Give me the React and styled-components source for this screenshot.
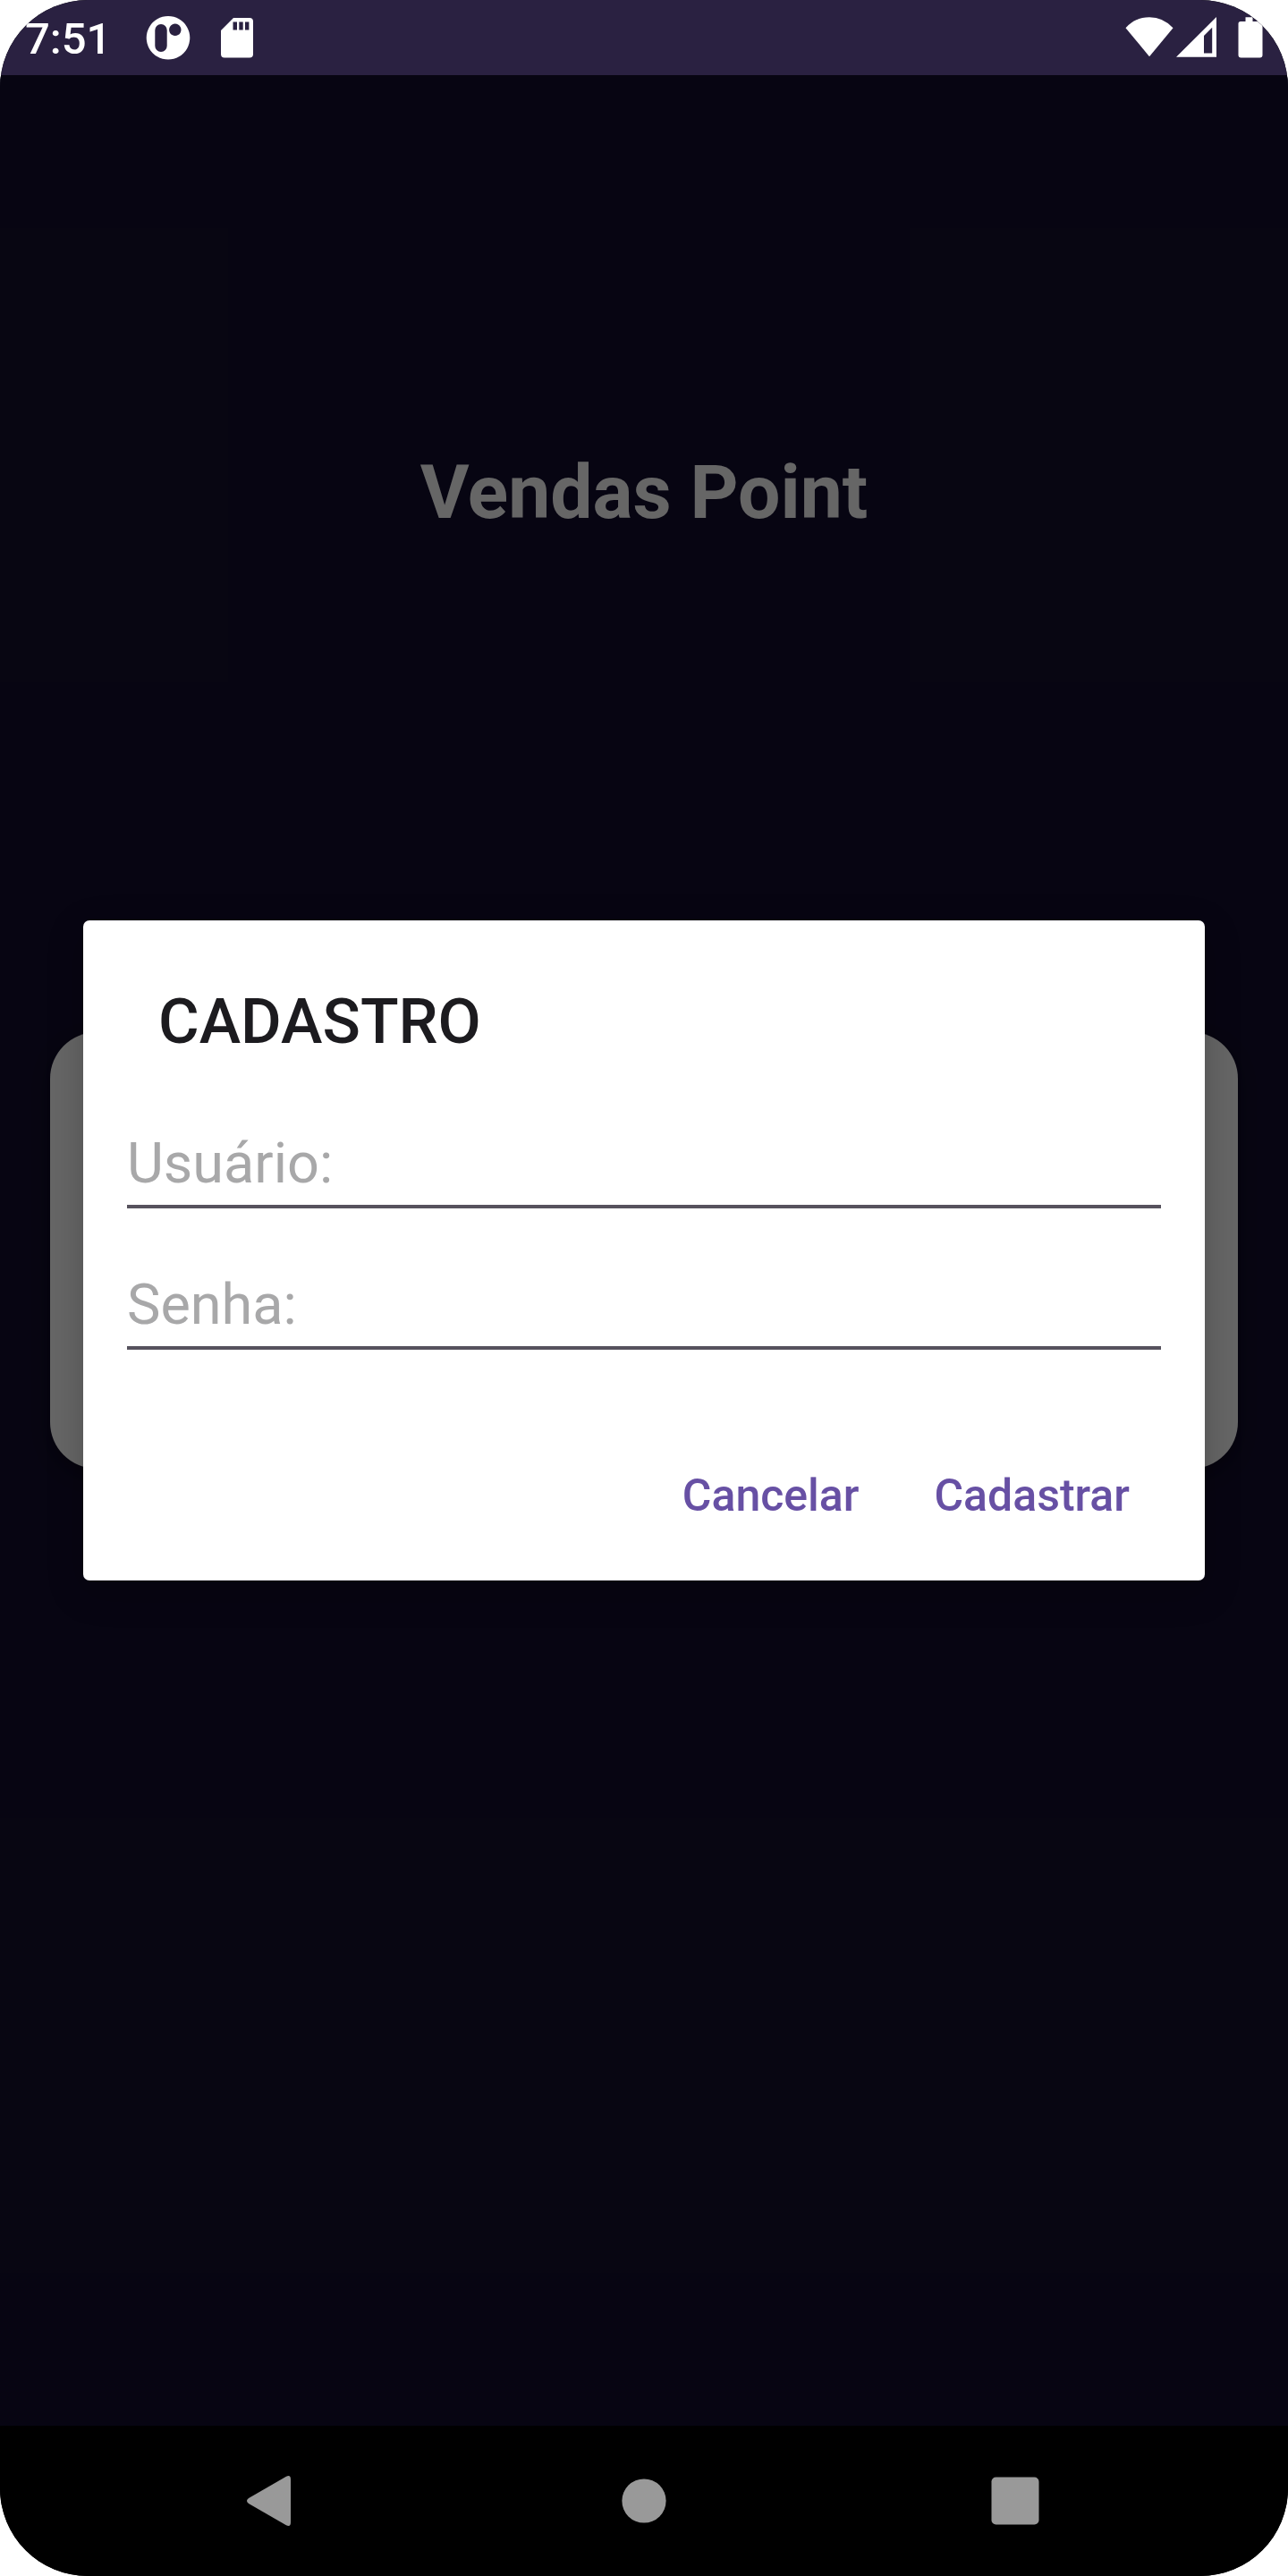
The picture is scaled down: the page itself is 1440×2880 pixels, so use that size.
import React from "react";
import styled, { createGlobalStyle } from "styled-components";

const GlobalStyle = createGlobalStyle`
  *, *::before, *::after { box-sizing: border-box; }
  body {
    margin: 0;
    background: #ffffff;
    font-family: Roboto, "Liberation Sans", sans-serif;
  }
`;

const Device = styled.div`
  display: flex;
  flex-direction: column;
  min-height: 100vh;
  border-radius: 98px;
  overflow: hidden;
  background: #000000;
`;

const StatusBar = styled.header`
  display: flex;
  align-items: center;
  justify-content: space-between;
  height: 84px;
  padding: 0 28px;
  background: #2a2141;
  color: #ffffff;
`;

const StatusGroup = styled.div`
  display: flex;
  align-items: center;
  gap: ${(p) => p.$gap}px;
`;

const Clock = styled.time`
  margin-right: 5px;
  padding-top: 3px;
  font-size: 49px;
  line-height: 56px;
  font-weight: 500;
`;

const StatusIcon = styled.svg`
  display: block;
  width: ${(p) => p.$width}px;
  height: 50px;
  fill: #ffffff;
`;

/* The app screen and the dialog layer share one grid cell. */
const Stage = styled.div`
  flex: 1;
  display: grid;
  grid-template: minmax(0, 1fr) / minmax(0, 1fr);
`;

const Screen = styled.main`
  grid-area: 1 / 1;
  display: grid;
  grid-template-rows: 1fr auto 1fr;
  padding: 0 56px;
  background: #130e2d;
`;

const AppTitle = styled.h1`
  margin: 0;
  padding-top: 418px;
  font-size: 84px;
  line-height: 98px;
  font-weight: 700;
  text-align: center;
  color: #ffffff;
`;

const LoginCard = styled.section`
  min-height: 488px;
  border-radius: 52px;
  background: #ffffff;
  box-shadow: 0 8px 20px rgba(0, 0, 0, 0.3);
`;

const Scrim = styled.div`
  grid-area: 1 / 1;
  display: flex;
  align-items: center;
  padding: 0 93px;
  background: rgba(0, 0, 0, 0.6);
`;

const Dialog = styled.form`
  flex: 1;
  display: flex;
  flex-direction: column;
  padding: 72px 0 32px;
  border-radius: 7px;
  background: #ffffff;
  box-shadow: 0 12px 40px rgba(0, 0, 0, 0.22);
`;

const DialogTitle = styled.h2`
  margin: 0;
  padding: 0 84px;
  font-size: 70px;
  line-height: 82px;
  font-weight: 500;
  color: #1c1b1f;
`;

const Fields = styled.div`
  display: flex;
  flex-direction: column;
  gap: 70px;
  padding: 80px 49px 100px;
`;

const Field = styled.input`
  width: 100%;
  height: 88px;
  padding: 0 0 10px;
  border: 0;
  border-bottom: 4px solid #56525d;
  border-radius: 0;
  outline: 0;
  background: transparent;
  font-family: inherit;
  font-size: 63px;
  line-height: 74px;
  color: #1c1b1f;

  &::placeholder {
    color: #a8a8a9;
    opacity: 1;
  }
`;

const Actions = styled.div`
  display: flex;
  justify-content: flex-end;
  padding: 0 42px;
`;

const TextButton = styled.button`
  height: 126px;
  padding: 0 42px;
  border: 0;
  background: transparent;
  font-family: inherit;
  font-size: 50px;
  line-height: 58px;
  font-weight: 500;
  color: #6750a4;
  cursor: pointer;
`;

const NavBar = styled.nav`
  display: flex;
  height: 168px;
  padding: 0 97px;
  background: #000000;
`;

const NavButton = styled.button`
  flex: 1;
  display: flex;
  align-items: center;
  justify-content: center;
  padding: 0;
  border: 0;
  background: transparent;
  cursor: pointer;
`;

const NavIcon = styled.svg`
  display: block;
  width: 70px;
  height: 70px;
  fill: #999999;
`;

function StatusIcons() {
  return (
    <StatusGroup $gap={3} aria-hidden="true">
      <StatusIcon $width={54} viewBox="0 0 54 50">
        <path d="M0.5 14.2 Q11.5 2.2 27 2.2 T53.5 14.2 L27 46.2 Z" />
      </StatusIcon>
      <StatusIcon $width={45} viewBox="0 0 45 50">
        <path fillRule="evenodd" d="M0 46.8 L45 2 V46.8 Z M31 23 V42.5 H40.2 V13.8 Z" />
      </StatusIcon>
      <StatusIcon $width={49} viewBox="0 0 49 50">
        <path d="M29.500 2.200 H37.500 V7 H46 Q48.500 7 48.500 9.500 V44.500 Q48.500 47.500 45.500 47.500 H24.500 Q21.500 47.500 21.500 44.500 V9.500 Q21.500 7 24 7 H29.500 Z" />
      </StatusIcon>
    </StatusGroup>
  );
}

export default function App() {
  return (
    <>
      <GlobalStyle />
      <Device>
        <StatusBar>
          <StatusGroup $gap={34}>
            <Clock>7:51</Clock>
            <StatusIcon $width={50} viewBox="0 0 50 50" aria-hidden="true">
              <path
                fillRule="evenodd"
                d="M25 1 a24.300 24.300 0 1 0 0.010 0 Z M17 10 a6.700 6.700 0 0 1 6.700 6.700 V34.300 a6.700 6.700 0 0 1 -13.400 0 V16.700 A6.700 6.700 0 0 1 17 10 Z M32.800 9.600 a6.700 6.700 0 1 1 -0.010 0 Z"
              />
            </StatusIcon>
            <StatusIcon $width={36} viewBox="0 0 36 50" aria-hidden="true">
              <path
                fillRule="evenodd"
                d="M14 3 H32 Q36 3 36 7 V43.500 Q36 47.500 32 47.500 H4 Q0 47.500 0 43.500 V17 Z M13.500 7.500 V16.500 H18 V7.500 Z M20.300 7.500 V16.500 H24.700 V7.500 Z M27 7.500 V16.500 H31.400 V7.500 Z"
              />
            </StatusIcon>
          </StatusGroup>
          <StatusIcons />
        </StatusBar>

        <Stage>
          <Screen>
            <AppTitle>Vendas Point</AppTitle>
            <LoginCard />
          </Screen>
          <Scrim>
            <Dialog
              role="dialog"
              aria-labelledby="dialog-title"
              onSubmit={(event) => event.preventDefault()}
            >
              <DialogTitle id="dialog-title">CADASTRO</DialogTitle>
              <Fields>
                <Field type="text" name="usuario" placeholder="Usuário:" aria-label="Usuário" />
                <Field type="password" name="senha" placeholder="Senha:" aria-label="Senha" />
              </Fields>
              <Actions>
                <TextButton type="button">Cancelar</TextButton>
                <TextButton type="submit">Cadastrar</TextButton>
              </Actions>
            </Dialog>
          </Scrim>
        </Stage>

        <NavBar>
          <NavButton type="button" aria-label="Voltar">
            <NavIcon viewBox="0 0 70 70">
              <path d="M8 32 L50 7.800 Q55 5.500 55 11 V59 Q55 64.500 50 62.200 L8 38 Q4 35 8 32 Z" />
            </NavIcon>
          </NavButton>
          <NavButton type="button" aria-label="Início">
            <NavIcon viewBox="0 0 70 70">
              <circle cx="35" cy="35" r="24.600" />
            </NavIcon>
          </NavButton>
          <NavButton type="button" aria-label="Recentes">
            <NavIcon viewBox="0 0 70 70">
              <rect x="8.500" y="8.500" width="53" height="53" rx="5" />
            </NavIcon>
          </NavButton>
        </NavBar>
      </Device>
    </>
  );
}
